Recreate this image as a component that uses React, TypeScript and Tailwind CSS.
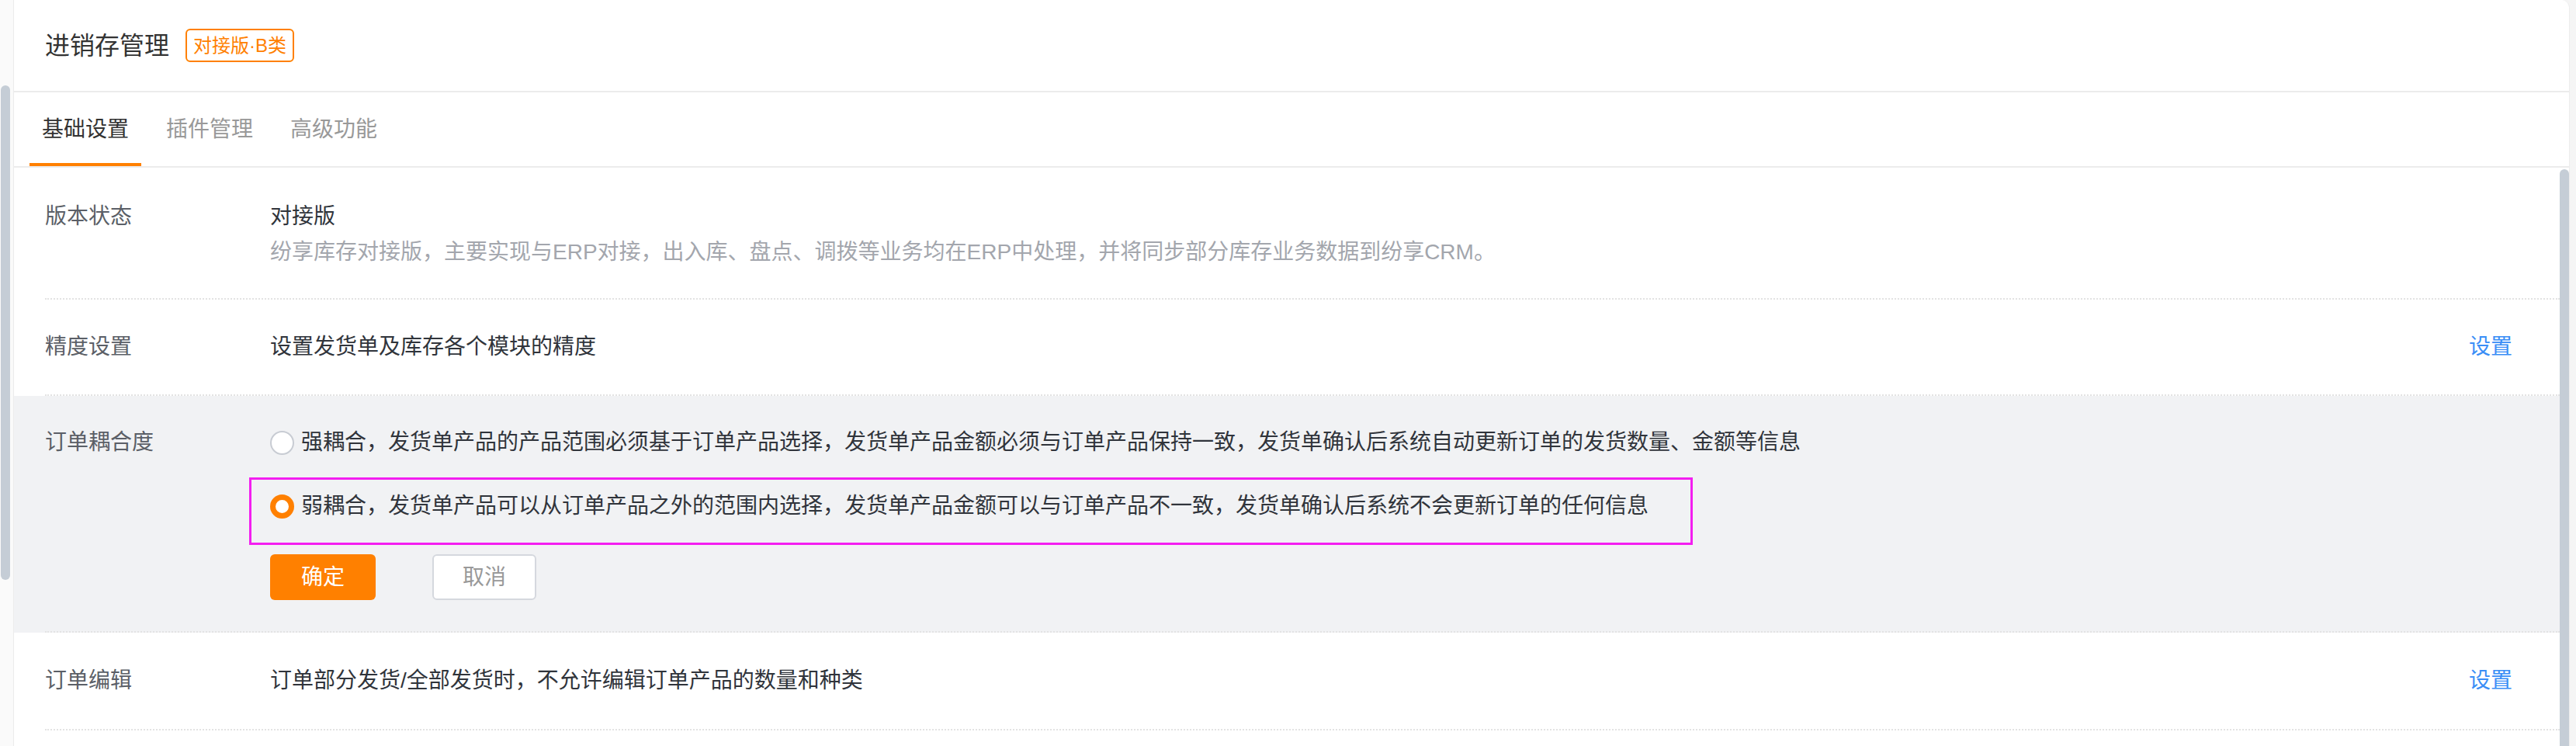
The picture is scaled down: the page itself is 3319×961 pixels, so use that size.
import React from "react";

const FONT = "font-['Liberation_Sans','Noto_Sans_CJK_SC',sans-serif]";

function Label({ children }: { children: React.ReactNode }) {
  return (
    <div className="w-[290px] shrink-0 text-[28px] leading-[40px] text-[#5b5f67]">{children}</div>
  );
}

function Radio({ checked }: { checked?: boolean }) {
  return checked ? (
    <span className="box-border inline-block h-[31px] w-[31px] shrink-0 rounded-full border-[7px] border-[#ff8000] bg-white" />
  ) : (
    <span className="box-border inline-block h-[31px] w-[31px] shrink-0 rounded-full border-2 border-[#c8ccd3] bg-white" />
  );
}

export default function App() {
  return (
    <div className={`${FONT} relative flex h-[961px] w-[3319px] overflow-hidden bg-[#f5f5f5]`}>
      {/* left strip with scrollbar */}
      <div className="relative w-[17px] shrink-0 bg-[#fafafa]">
        <div className="absolute left-[1px] top-[110px] h-[637px] w-[12px] rounded-[6px] bg-[#c5cdd6]" />
      </div>

      {/* card */}
      <div className="flex w-[3294px] shrink-0 flex-col rounded-tr-[10px] border-l border-r border-[#ececec] bg-white">
        {/* header */}
        <div className="flex h-[119px] shrink-0 items-center border-b-2 border-[#ececec] pl-[40px]">
          <span className="text-[32px] leading-[44px] text-[#333333]">进销存管理</span>
          <span className="ml-[21px] box-border flex h-[43px] items-center rounded-[6px] border-2 border-[#ff8000] px-[8px] text-[24px] text-[#ff8000]">
            对接版·B类
          </span>
        </div>

        {/* tabs */}
        <div className="flex h-[97px] shrink-0 items-stretch gap-[16px] border-b-2 border-[#ececec] pl-[20px]">
          <div className="flex items-center border-b-4 border-[#ff8000] px-[16px] pt-[4px] text-[28px] text-[#333333]">
            基础设置
          </div>
          <div className="flex items-center border-b-4 border-transparent px-[16px] pt-[4px] text-[28px] text-[#999999]">
            插件管理
          </div>
          <div className="flex items-center border-b-4 border-transparent px-[16px] pt-[4px] text-[28px] text-[#999999]">
            高级功能
          </div>
        </div>

        {/* body */}
        <div className="flex min-h-0 flex-1">
          <div className="flex flex-1 flex-col">
            {/* row 1 */}
            <div className="pl-[40px]">
              <div className="flex border-b-2 border-dotted border-[#e3e3e3] pb-[39px] pt-[43px]">
                <Label>版本状态</Label>
                <div className="flex flex-col">
                  <div className="text-[28px] leading-[40px] text-[#30343b]">对接版</div>
                  <div className="mt-[6px] text-[28px] leading-[40px] text-[#a3a6ad]">
                    纷享库存对接版，主要实现与ERP对接，出入库、盘点、调拨等业务均在ERP中处理，并将同步部分库存业务数据到纷享CRM。
                  </div>
                </div>
              </div>
            </div>

            {/* row 2 */}
            <div className="pl-[40px]">
              <div className="flex items-center border-b-2 border-dotted border-[#e3e3e3] pb-[41px] pr-[61px] pt-[41px]">
                <Label>精度设置</Label>
                <div className="flex-1 text-[28px] leading-[40px] text-[#30343b]">
                  设置发货单及库存各个模块的精度
                </div>
                <a className="text-[28px] leading-[40px] text-[#3a8ef6]">设置</a>
              </div>
            </div>

            {/* row 3 */}
            <div className="bg-[#f1f2f4] pl-[40px]">
              <div className="flex border-b-2 border-dotted border-[#e3e3e3] pb-[40px] pt-[40px]">
                <Label>订单耦合度</Label>
                <div className="flex flex-col">
                  <div className="flex items-center gap-[9px]">
                    <Radio />
                    <span className="text-[28px] leading-[40px] text-[#30343b]">
                      强耦合，发货单产品的产品范围必须基于订单产品选择，发货单产品金额必须与订单产品保持一致，发货单确认后系统自动更新订单的发货数量、金额等信息
                    </span>
                  </div>
                  <div className="relative mt-[42px] flex items-center gap-[9px]">
                    <div className="pointer-events-none absolute left-[-27px] top-[-17px] h-[87px] w-[1860px] border-[3px] border-[#f31ff0]" />
                    <Radio checked />
                    <span className="text-[28px] leading-[40px] text-[#30343b]">
                      弱耦合，发货单产品可以从订单产品之外的范围内选择，发货单产品金额可以与订单产品不一致，发货单确认后系统不会更新订单的任何信息
                    </span>
                  </div>
                  <div className="mt-[42px] flex items-center gap-[73px]">
                    <button className="flex h-[59px] w-[136px] items-center justify-center rounded-[6px] bg-[#ff8000] text-[28px] text-white">
                      确定
                    </button>
                    <button className="box-border flex h-[59px] w-[134px] items-center justify-center rounded-[6px] border-2 border-[#d5d8de] bg-white text-[28px] text-[#999999]">
                      取消
                    </button>
                  </div>
                </div>
              </div>
            </div>

            {/* row 4 */}
            <div className="pl-[40px]">
              <div className="flex items-center border-b-2 border-dotted border-[#e3e3e3] pb-[42px] pr-[61px] pt-[42px]">
                <Label>订单编辑</Label>
                <div className="flex-1 text-[28px] leading-[40px] text-[#30343b]">
                  订单部分发货/全部发货时，不允许编辑订单产品的数量和种类
                </div>
                <a className="text-[28px] leading-[40px] text-[#3a8ef6]">设置</a>
              </div>
            </div>
          </div>

          {/* right scrollbar */}
          <div className="mt-[2px] w-[12px] shrink-0 rounded-t-[6px] bg-[#c5cdd6]" />
        </div>
      </div>
    </div>
  );
}
